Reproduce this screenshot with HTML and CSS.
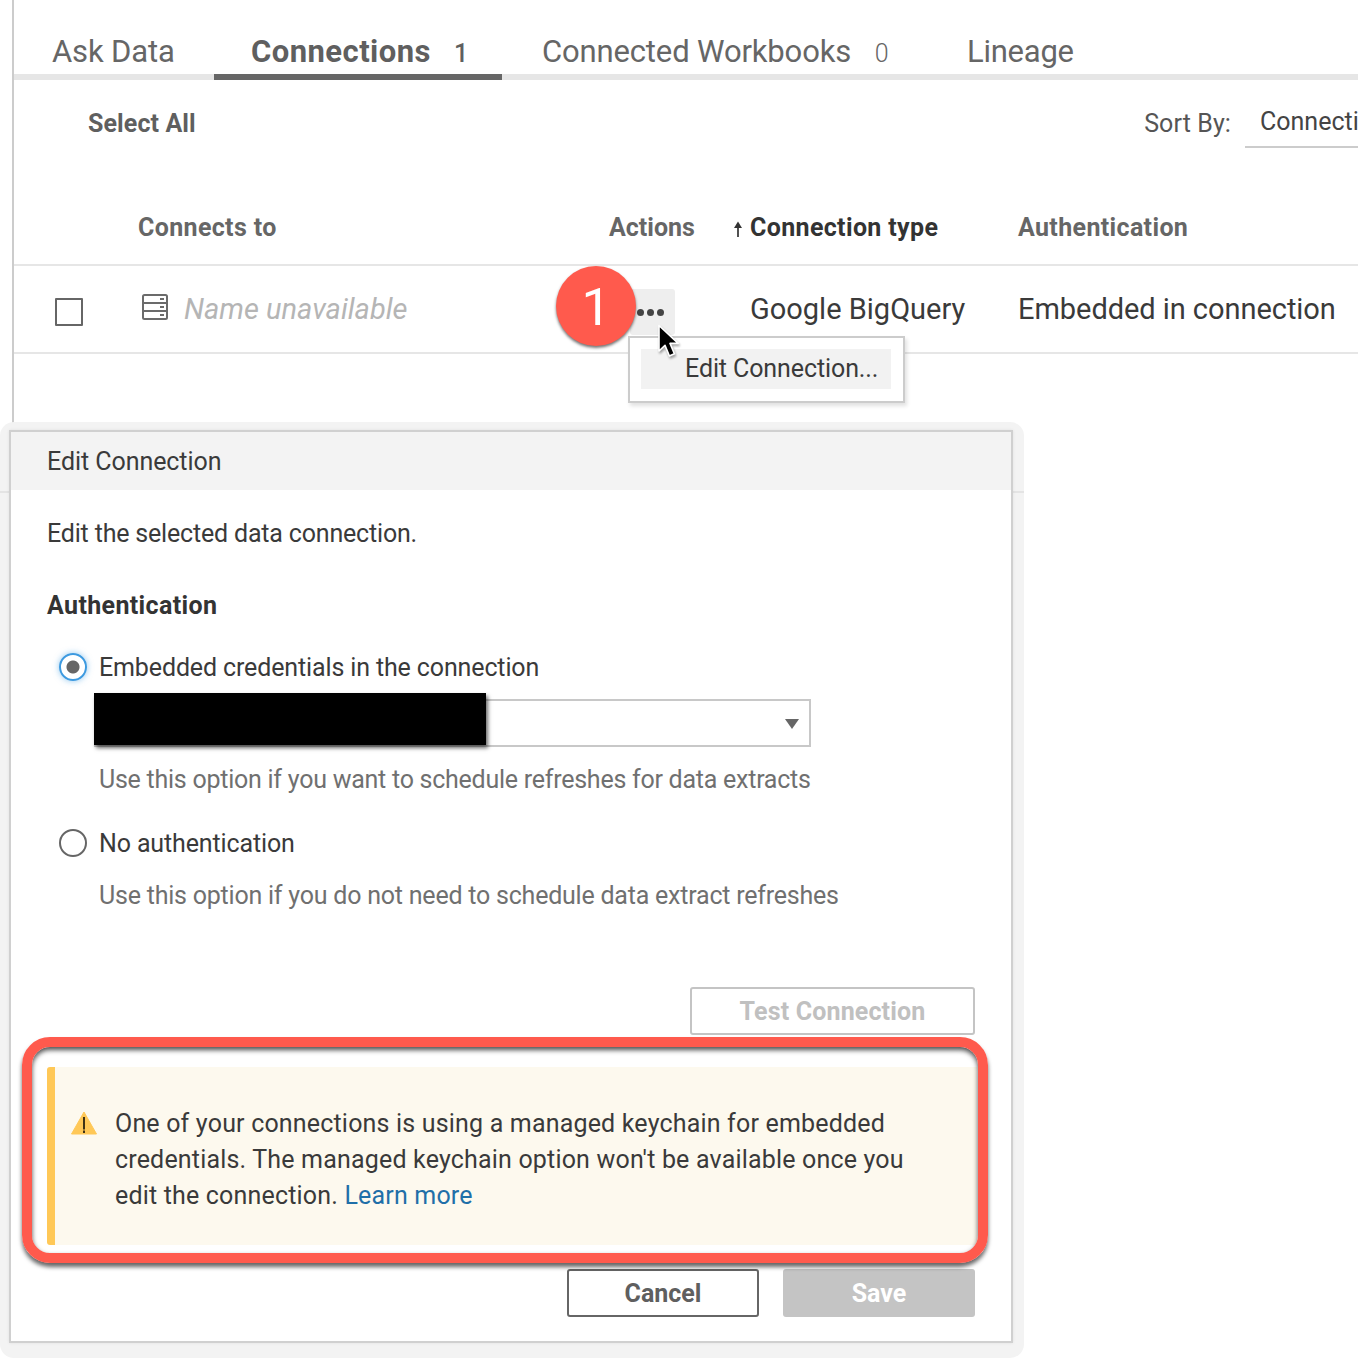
FILE: index.html
```html
<!DOCTYPE html>
<html lang="en">
<head>
<meta charset="utf-8">
<title>Edit Connection</title>
<link rel="stylesheet" href="styles.css">
</head>
<body>
<main class="page">
  <nav class="tabs">
    <a class="tab tab-ask">Ask Data</a>
    <a class="tab tab-conn active">Connections <span class="count">1</span></a>
    <a class="tab tab-wb">Connected Workbooks <span class="count count-light">0</span></a>
    <a class="tab tab-lin">Lineage</a>
  </nav>
  <div class="toolbar">
    <span class="select-all">Select All</span>
    <div class="sort">
      <span class="sort-label">Sort By:</span>
      <span class="sort-value">Connection type</span>
    </div>
  </div>
  <div class="table-head">
    <span></span>
    <span>Connects to</span>
    <span class="col-actions">Actions</span>
    <span class="sorted"><svg class="sort-arrow" viewBox="0 0 10 16" width="10" height="16"><path d="M5 16V5" fill="none" stroke="#333" stroke-width="1.700"/><path d="M5 .5L9 7H1z" fill="#333"/></svg>Connection type</span>
    <span>Authentication</span>
  </div>
  <div class="table-row">
    <span class="checkbox"></span>
    <span class="name">
      <svg class="db-icon" viewBox="0 0 26 26" width="26" height="26"><rect x="1" y="1" width="24" height="24" rx="1.500" fill="none" stroke="#6b6b6b" stroke-width="2"/><path d="M1 9h24M1 17h24" fill="none" stroke="#6b6b6b" stroke-width="2"/><path d="M18 4h4v2h-4zM18 12h4v2h-4zM18 20h4v2h-4z" fill="#6b6b6b"/></svg>
      <em>Name unavailable</em>
    </span>
    <span class="action-cell"><span class="more"><i></i><i></i><i></i></span></span>
    <span class="type">Google BigQuery</span>
    <span class="auth">Embedded in connection</span>
  </div>
</main>

<div class="menu"><div class="menu-item">Edit Connection...</div></div>
<div class="badge">1</div>
<svg class="cursor" viewBox="0 0 24 38" width="24" height="38"><path d="M2 1.500V27l6-5.600L12.400 32l5-2.200-4.400-10.400h8.200z" fill="#000" stroke="#fff" stroke-width="1.600" stroke-linejoin="round"/></svg>

<section class="modal">
  <div class="dialog">
    <header class="dialog-title">Edit Connection</header>
    <div class="dialog-body">
      <p class="intro">Edit the selected data connection.</p>
      <h2 class="section-title">Authentication</h2>
      <label class="radio-row first"><span class="radio on"></span>Embedded credentials in the connection</label>
      <div class="combo">
        <div class="combo-caret"></div>
        <div class="redaction"></div>
      </div>
      <p class="hint hint-a">Use this option if you want to schedule refreshes for data extracts</p>
      <label class="radio-row second"><span class="radio"></span>No authentication</label>
      <p class="hint hint-b">Use this option if you do not need to schedule data extract refreshes</p>
      <div class="test-row"><button class="btn btn-test">Test Connection</button></div>
      <div class="alert">
        <svg class="warn" viewBox="0 0 26 24" width="26" height="24"><path d="M13 1L25.500 23H.5z" fill="#ffc857" stroke="#ffc857" stroke-linejoin="round"/><path d="M12.250 6h1.500v12.500h-1.500zM12.250 19.500h1.500v2.500h-1.500z" fill="#000"/></svg>
        <p>One of your connections is using a managed keychain for embedded credentials. The managed keychain option won't be available once you edit the connection. <a>Learn more</a></p>
      </div>
      <div class="actions">
        <button class="btn btn-cancel">Cancel</button>
        <button class="btn btn-save">Save</button>
      </div>
    </div>
  </div>
  <div class="callout"></div>
</section>
</body>
</html>
```
FILE: styles.css
```css
* { box-sizing: border-box; }
html, body { margin: 0; height: 100%; }
body {
  position: relative;
  width: 1358px;
  height: 1358px;
  overflow: hidden;
  background: #fff;
  color: #3a3a3a;
  font-family: Roboto, "Liberation Sans", sans-serif;
  font-size: 25px;
}
p, h2 { margin: 0; }

/* Page behind the dialog */
.page {
  margin-left: 12px;
  border-left: 2px solid #ccc;
  height: 430px;
  overflow: hidden;
}
.tabs {
  display: flex;
  height: 80px;
  border-bottom: 6px solid #e6e6e6;
  font-size: 31px;
  color: #666;
}
.tab {
  height: 80px;
  line-height: 104px;
  white-space: nowrap;
}
.tab-ask { padding-left: 38px; width: 200px; letter-spacing: -.15px; }
.tab-conn { width: 288px; padding-left: 37px; font-weight: 700; letter-spacing: .45px; border-bottom: 6px solid #666; color: #5f5f5f; }
.tab-wb { width: 465px; padding-left: 40px; letter-spacing: -.15px; }
.tab-lin { letter-spacing: -.25px; }
.count { font-size: 25px; margin-left: 15px; font-weight: 500; letter-spacing: 0; }
.count-light { font-weight: 300; margin-left: 16px; }

.toolbar {
  display: flex;
  justify-content: space-between;
  height: 86px;
  padding-left: 74px;
  align-items: center;
}
.select-all { font-weight: 700; color: #5f5f5f; letter-spacing: .1px; }
.sort { display: flex; align-items: center; gap: 14px; }
.sort-label { color: #555; letter-spacing: .1px; }
.sort-value {
  display: block;
  width: 113px;
  height: 50px;
  line-height: 48px;
  padding-left: 15px;
  overflow: hidden;
  white-space: nowrap;
  border-bottom: 2px solid #ccc;
  color: #444;
}

.table-head, .table-row {
  display: grid;
  grid-template-columns: 124px 471px 124px 285px 1fr;
  align-items: center;
  white-space: nowrap;
}
.table-head {
  height: 100px;
  padding-top: 24px;
  border-bottom: 2px solid #e6e6e6;
  font-weight: 700;
  letter-spacing: .35px;
  color: #666;
}
.col-actions { letter-spacing: 0; }
.sorted { color: #333; display: flex; align-items: center; }
.sort-arrow { margin-right: 7px; margin-top: 4px; }
.table-row {
  height: 88px;
  border-bottom: 2px solid #e6e6e6;
  font-size: 29px;
}
.checkbox {
  width: 28px;
  height: 28px;
  margin-left: 41px;
  margin-top: 5px;
  border: 2px solid #666;
  border-radius: 1px;
}
.name { display: flex; align-items: center; gap: 16px; }
.db-icon { margin-left: 4px; margin-top: -4px; }
.name em { color: #b5b5b5; font-style: italic; }
.action-cell { display: block; }
.more {
  display: flex;
  justify-content: flex-end;
  align-items: center;
  gap: 3px;
  margin-left: 21px;
  width: 45px;
  height: 46px;
  padding: 0 11px 0 0;
  margin-top: 6px;
  border-radius: 3px;
  background: #eee;
}
.more i { flex: none; width: 7px; height: 7px; border-radius: 50%; background: #444; }
.type { padding-left: 17px; }
.auth { letter-spacing: -.05px; }

/* Overlays */
.menu {
  position: absolute;
  left: 628px;
  top: 336px;
  width: 277px;
  height: 67px;
  padding: 11px 12px 11px 11px;
  background: #fff;
  border: 2px solid #ccc;
  box-shadow: 2px 3px 4px rgba(0,0,0,.12);
}
.menu-item {
  height: 40px;
  line-height: 40px;
  padding-left: 44px;
  background: #f2f2f2;
  white-space: nowrap;
  letter-spacing: -.1px;
}
.badge {
  position: absolute;
  left: 556px;
  top: 266px;
  width: 80px;
  height: 80px;
  border-radius: 50%;
  background: #ff5a4d;
  box-shadow: 0 2px 3px rgba(0,0,0,.55);
  color: #fff;
  text-align: center;
  font-size: 52px;
  line-height: 84px;
}
.cursor {
  position: absolute;
  left: 657px;
  top: 324px;
  filter: drop-shadow(1px 2px 1px rgba(0,0,0,.35));
}

/* Dialog */
.modal {
  position: absolute;
  left: 0;
  top: 422px;
  width: 1024px;
  height: 936px;
  padding: 8px 11px 15px 9px;
  background: #f3f3f3;
  border-radius: 14px;
}
.modal::before {
  content: "";
  position: absolute;
  left: 0;
  right: 0;
  top: 69px;
  height: 2px;
  background: #e4e4e4;
}
.dialog {
  position: relative;
  height: 913px;
  background: #fff;
  border: 2px solid #d0d0d0;
  box-shadow: 0 0 3px rgba(0,0,0,.08);
}
.dialog-title {
  height: 58px;
  line-height: 60px;
  padding-left: 36px;
  background: #f3f3f3;
  letter-spacing: -.06px;
}
.dialog-body { padding: 0 36px; }
.intro { line-height: 38px; margin: 25px 0 -2px; letter-spacing: -.18px; }
.section-title { font-size: 25px; line-height: 38px; margin: 36px 0 -2px; font-weight: 700; letter-spacing: .36px; color: #333; }
.radio-row { display: flex; align-items: center; gap: 12px; padding-left: 12px; line-height: 38px; margin-bottom: -2px; white-space: nowrap; letter-spacing: -.13px; }
.radio-row.first { margin-top: 26px; }
.radio-row.second { margin-top: 28px; }
.radio {
  width: 28px;
  height: 28px;
  margin-top: -2px;
  border-radius: 50%;
  border: 2px solid #666;
  background: #fff;
  flex: none;
}
.radio.on {
  border-color: #3d9ae0;
  box-shadow: 0 0 6px rgba(61,154,224,.55);
  background: radial-gradient(circle, #666 0 6px, #fff 7px);
}
.combo {
  position: relative;
  height: 48px;
  margin: 14px 0 0 47px;
  width: 717px;
  border: 2px solid #c8c8c8;
}
.combo-caret {
  position: absolute;
  right: 10px;
  top: 18px;
  border-left: 7px solid transparent;
  border-right: 7px solid transparent;
  border-top: 10px solid #666;
}
.redaction {
  position: absolute;
  left: -2px;
  top: -8px;
  width: 392px;
  height: 52px;
  background: #000;
  box-shadow: 2px 3px 4px rgba(0,0,0,.6);
}
.hint { line-height: 38px; margin-bottom: -2px; color: #707070; padding-left: 52px; white-space: nowrap; letter-spacing: -.22px; }
.hint-a { margin-top: 14px; letter-spacing: -.25px; }
.hint-b { margin-top: 16px; }
.test-row { display: flex; justify-content: flex-end; margin-top: 74px; }
.btn {
  height: 48px;
  border-radius: 3px;
  font-family: inherit;
  font-size: 25px;
  font-weight: 700;
  padding: 0;
  background: #fff;
}
.btn-test { width: 285px; border: 2px solid #c4c4c4; color: #c0c0c0; padding-top: 1px; letter-spacing: .15px; }
.alert {
  display: flex;
  height: 178px;
  margin: 32px -2px 0 0;
  padding: 39px 40px 0 16px;
  gap: 18px;
  background: #fdf9ee;
  border-left: 8px solid #ffc857;
  border-radius: 3px 0 0 3px;
  line-height: 36px;
  letter-spacing: .18px;
}
.warn { flex: none; margin-top: 5px; }
.alert a { color: #1f6fa8; }
.actions { display: flex; justify-content: flex-end; gap: 24px; margin-top: 24px; }
.btn-cancel { width: 192px; border: 2px solid #666; color: #5f5f5f; }
.btn-save { width: 192px; border: 0; background: #c4c4c4; color: #fff; }
.callout {
  position: absolute;
  left: 22px;
  top: 615px;
  width: 966px;
  height: 226px;
  border: 10px solid #ff5a4d;
  border-radius: 28px;
  box-shadow: 0 4px 4px rgba(0,0,0,.6), inset 0 3px 5px rgba(0,0,0,.7);
  pointer-events: none;
}
```
